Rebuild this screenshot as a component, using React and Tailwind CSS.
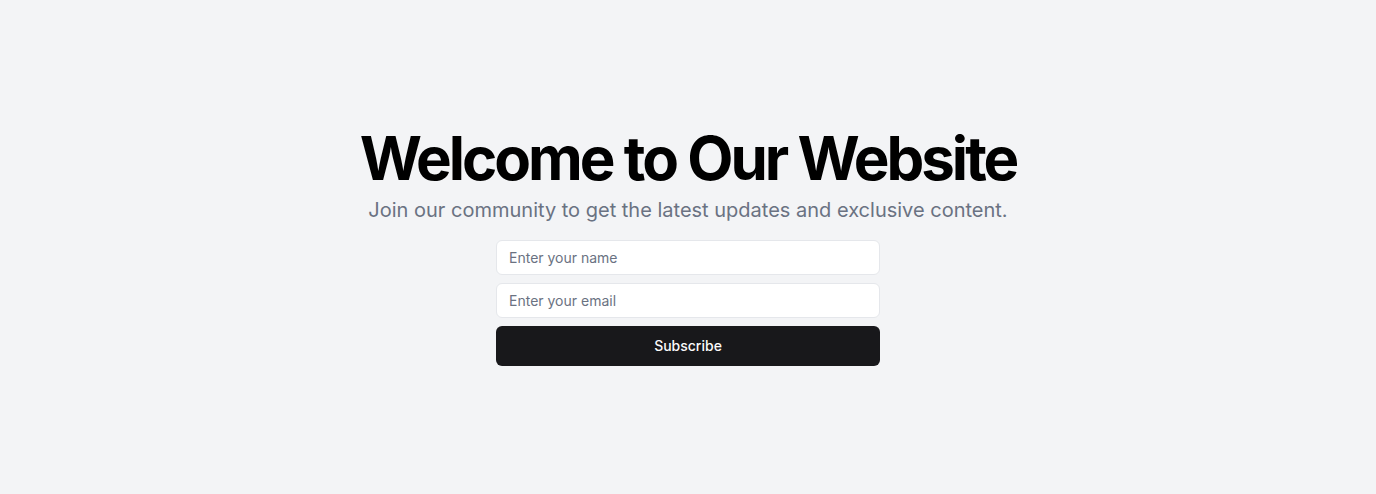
export default function App() {
  return (
    <div className="flex min-h-screen w-full items-center justify-center bg-[#f3f4f6] px-4 font-['Inter',sans-serif]">
      <div className="flex flex-col items-center space-y-4 text-center">
        <div className="space-y-2">
          <h1 className="text-6xl/none font-bold tracking-tighter text-black">Welcome to Our Website</h1>
          <p className="mx-auto max-w-[700px] text-xl text-gray-500">
            Join our community to get the latest updates and exclusive content.
          </p>
        </div>
        <form className="w-full max-w-sm space-y-2" onSubmit={(e) => e.preventDefault()}>
          <input
            type="text"
            placeholder="Enter your name"
            className="flex h-[35px] w-full rounded-md border border-gray-200 bg-white px-3 text-sm placeholder:text-gray-500 outline-none"
          />
          <input
            type="email"
            placeholder="Enter your email"
            className="flex h-[35px] w-full rounded-md border border-gray-200 bg-white px-3 text-sm placeholder:text-gray-500 outline-none"
          />
          <button
            type="submit"
            className="flex h-10 w-full items-center justify-center rounded-md bg-[#18181b] text-sm font-medium text-zinc-50"
          >
            Subscribe
          </button>
        </form>
      </div>
    </div>
  );
}
